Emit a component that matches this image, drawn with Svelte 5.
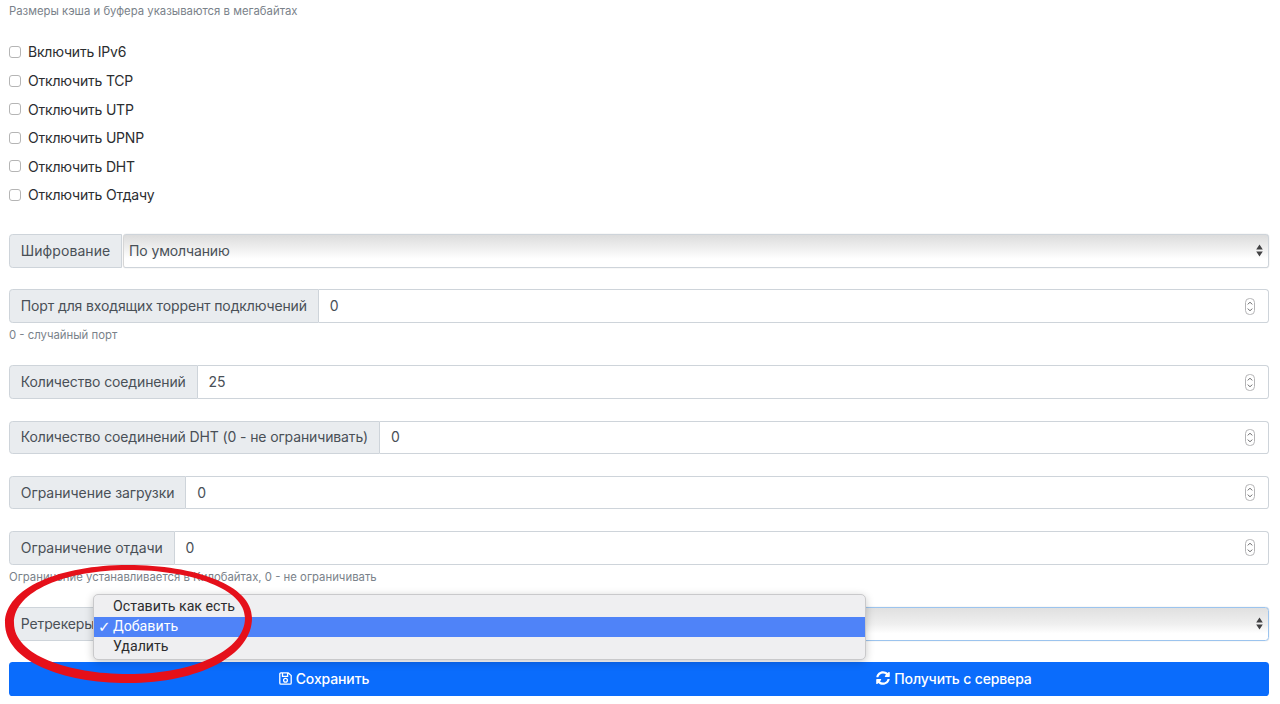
<script>
  const flags = ['Включить IPv6', 'Отключить TCP', 'Отключить UTP', 'Отключить UPNP', 'Отключить DHT', 'Отключить Отдачу'];
  const menu = [
    { label: 'Оставить как есть', active: false },
    { label: 'Добавить', active: true },
    { label: 'Удалить', active: false }
  ];
</script>

{#snippet arrows()}
  <svg class="arrows" width="7" height="13" viewBox="0 0 7 13" aria-hidden="true">
    <path d="M3.5 .6 L6.8 5.6 H.2 Z M3.5 12.4 L6.8 7.4 H.2 Z" fill="#414143" />
  </svg>
{/snippet}

{#snippet numberRow(label, value, wide = false)}
  <div class="group">
    <span class="addon" class:wide>{label}</span>
    <div class="control">
      <span class="value">{value}</span>
      <svg class="spin" width="10" height="17" viewBox="0 0 10 17" aria-hidden="true">
        <rect x=".5" y=".5" width="9" height="16" rx="4" fill="#fff" stroke="#b4b4b6" />
        <path d="M2.8 6.4 L5 4.2 L7.2 6.4 M2.8 10.6 L5 12.8 L7.2 10.6" fill="none" stroke="#636365" stroke-width="1" />
      </svg>
    </div>
  </div>
{/snippet}

<div class="page">
  <p class="help top">Размеры кэша и буфера указываются в мегабайтах</p>

  <div class="checks">
    {#each flags as flag}
      <label class="check"><input type="checkbox" /><span>{flag}</span></label>
    {/each}
  </div>

  <div class="field">
    <div class="group">
      <span class="addon widest">Шифрование</span>
      <div class="select"><span>По умолчанию</span>{@render arrows()}</div>
    </div>
  </div>

  <div class="field">
    {@render numberRow('Порт для входящих торрент подключений', '0')}
    <p class="help">0 - случайный порт</p>
  </div>

  <div class="field">{@render numberRow('Количество соединений', '25')}</div>
  <div class="field">{@render numberRow('Количество соединений DHT (0 - не ограничивать)', '0')}</div>
  <div class="field">{@render numberRow('Ограничение загрузки', '0', true)}</div>

  <div class="field">
    {@render numberRow('Ограничение отдачи', '0', true)}
    <p class="help">Ограничение устанавливается в Килобайтах, 0 - не ограничивать</p>
  </div>

  <div class="field retrack">
    <div class="group">
      <span class="addon">Ретрекеры</span>
      <div class="select focus"><span></span>{@render arrows()}</div>
    </div>
    <ul class="menu">
      {#each menu as item}
        <li class:active={item.active}>
          <span class="tick">{item.active ? '✓' : ''}</span><span class="label">{item.label}</span>
        </li>
      {/each}
    </ul>
  </div>

  <div class="actions">
    <button type="button">
      <svg width="13" height="13" viewBox="0 0 13 13" aria-hidden="true">
        <path d="M1.9 .8 H9.2 L12.2 3.6 V11 A1.2 1.2 0 0 1 11 12.2 H2 A1.2 1.2 0 0 1 .8 11 V1.9 A1.1 1.1 0 0 1 1.9 .8 Z M3.5 1 V4.4 H8.6 V1" fill="none" stroke="#fff" stroke-width="1.3" />
        <circle cx="6.5" cy="8.2" r="1.9" fill="none" stroke="#fff" stroke-width="1.3" />
      </svg>
      Сохранить
    </button>
    <button type="button">
      <svg width="14" height="14" viewBox="0 0 512 512" aria-hidden="true">
        <path fill="#fff" d="M370.72 133.28C339.458 104.008 298.888 87.962 255.848 88c-77.458.068-144.328 53.178-162.791 126.85-1.344 5.363-6.122 9.15-11.651 9.15H24.103c-7.498 0-13.194-6.807-11.807-14.176C33.933 94.924 134.813 8 256 8c66.448 0 126.791 26.136 171.315 68.685L463.03 40.97C478.149 25.851 504 36.559 504 57.941V192c0 13.255-10.745 24-24 24H345.941c-21.382 0-32.09-25.851-16.971-40.971l41.75-41.749zM32 296h134.059c21.382 0 32.09 25.851 16.971 40.971l-41.75 41.75c31.262 29.273 71.835 45.319 114.876 45.28 77.418-.07 144.315-53.144 162.787-126.849 1.344-5.363 6.122-9.15 11.651-9.15h57.304c7.498 0 13.194 6.807 11.807 14.176C478.067 417.076 377.187 504 256 504c-66.448 0-126.791-26.136-171.315-68.685L48.97 471.03C33.851 486.149 8 475.441 8 454.059V320c0-13.255 10.745-24 24-24z" />
      </svg>
      Получить с сервера
    </button>
  </div>

  <svg class="scribble" width="270" height="130" viewBox="0 0 270 130" aria-hidden="true">
    <path fill="#e5101a" fill-rule="evenodd" d="M128 2 C60 2 5 25 5 60 C5 98 62 120 128 120 C200 120 252 92 252 55 C252 22 195 2 128 2 Z M128 7 C66 7 14 28 14 60 C14 92 68 111 128 111 C195 111 245 87 245 55 C245 26 192 7 128 7 Z" />
  </svg>
</div>

<style>
  :global(body) {
    margin: 0;
    background: #fff;
    font-family: Inter, "Noto Sans", sans-serif;
    color: #212529;
  }
  .page {
    position: relative;
    height: 704px;
    overflow: hidden;
    box-sizing: border-box;
    padding: 3px 11px 0 9px;
    font-size: 14px;
    letter-spacing: -.13px;
  }
  p { margin: 0; }
  .help {
    height: 16px;
    margin-top: 5px;
    font-size: 11.35px;
    line-height: 14px;
    letter-spacing: 0;
    color: #7a828a;
  }
  .help.top { margin-top: 0; line-height: 16px; }
  .checks { margin: 18.7px 0 24.8px; }
  .check {
    display: flex;
    align-items: center;
    gap: 7px;
    height: 28.6px;
    color: #2b2d30;
    letter-spacing: -.2px;
  }
  .check input {
    appearance: none;
    box-sizing: border-box;
    width: 12px;
    height: 12px;
    margin: 0;
    background: #fff;
    border: 1px solid #b5b5b5;
    border-radius: 3px;
  }
  .field { margin-bottom: 21.6px; }
  .group {
    display: flex;
    height: 33.6px;
    box-sizing: border-box;
    line-height: 1;
  }
  .addon {
    display: flex;
    align-items: center;
    padding: 0 10.8px;
    background: #e9ecef;
    border: 1px solid #ced4da;
    border-radius: 3.6px 0 0 3.6px;
    color: #495057;
    white-space: nowrap;
  }
  .addon.wide { letter-spacing: -.06px; }
  .addon.widest { letter-spacing: .07px; }
  .control, .select {
    flex: 1;
    display: flex;
    align-items: center;
    justify-content: space-between;
    min-width: 0;
    box-sizing: border-box;
    border: 1px solid #ced4da;
    border-left: 0;
    border-radius: 0 3.6px 3.6px 0;
    color: #495057;
  }
  .control { padding: 0 13px 0 11px; }
  .select {
    padding: 0 5px;
    margin-left: 1px;
    border-left: 1px solid #d6d6d6;
    border-radius: 3.6px;
    background: linear-gradient(#dcdcdc, #f1f1f1 45%, #fff 75%);
    box-shadow: 0 0 1px #bbb;
  }
  .select.focus {
    margin-left: 0;
    border: 1px solid #9cc4ee;
    background: linear-gradient(#e0e0e0, #efefef 50%, #fff 80%);
  }
  .retrack { position: relative; }
  .menu {
    position: absolute;
    z-index: 1;
    top: -13px;
    left: 84px;
    width: 773px;
    height: 66px;
    box-sizing: border-box;
    margin: 0;
    padding: 2px 0;
    list-style: none;
    background: #efeff1;
    border: 1px solid #c9c9cb;
    border-radius: 5px;
    box-shadow: 0 2px 8px rgba(0, 0, 0, .22);
    color: #2c2c2e;
  }
  .menu li {
    display: flex;
    align-items: center;
    height: 20px;
    font-family: Roboto, Inter, sans-serif;
    font-size: 14.2px;
    letter-spacing: 0;
  }
  .menu li.active {
    background: #4f83f8;
    color: #fff;
  }
  .label { margin-top: -2px; }
  .tick {
    width: 19px;
    box-sizing: border-box;
    padding-left: 4px;
    font-size: 15px;
    font-weight: 700;
    font-family: "DejaVu Sans", sans-serif;
  }
  .actions {
    display: flex;
    height: 34px;
    border-radius: 3.6px;
    overflow: hidden;
    background: #0a6cfc;
  }
  .actions button {
    flex: 1;
    display: flex;
    align-items: center;
    justify-content: center;
    gap: 4px;
    border: 0;
    padding: 0 0 2px;
    background: none;
    color: #fff;
    font: 500 14px Inter, sans-serif;
    letter-spacing: -.13px;
  }
  .scribble {
    position: absolute;
    z-index: 2;
    top: 563px;
    left: 0;
  }
</style>
